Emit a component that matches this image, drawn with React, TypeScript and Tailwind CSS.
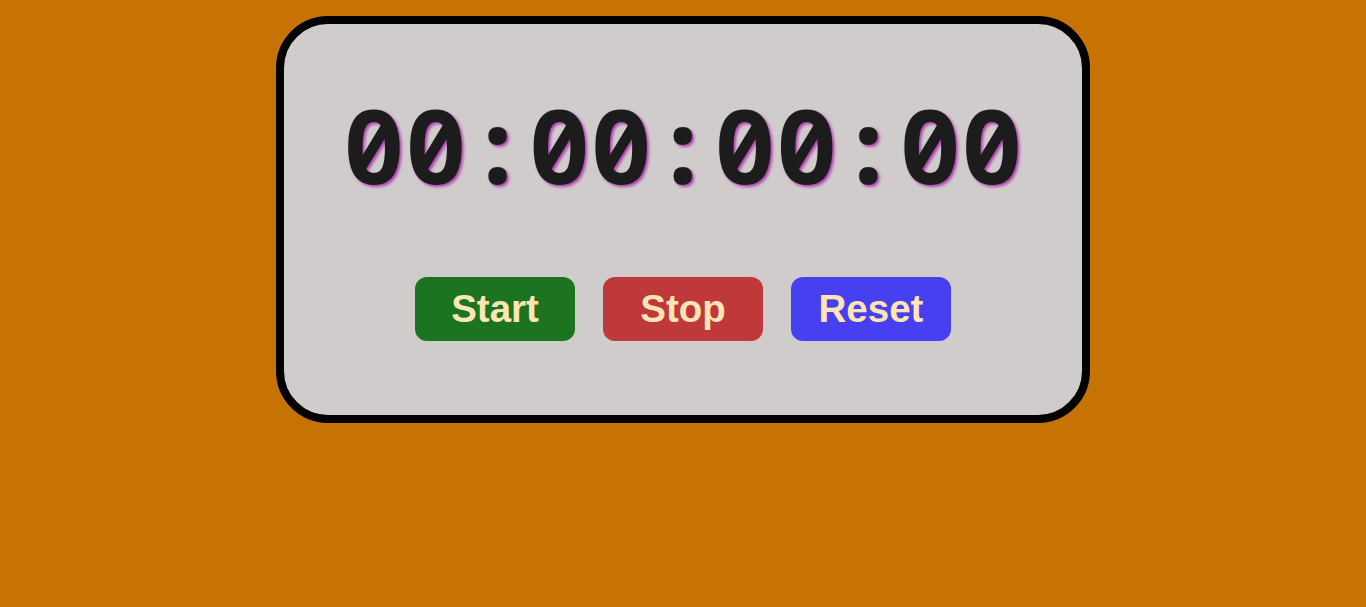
export default function App() {
  const btn =
    "h-[64px] w-[160px] rounded-[12px] text-[38.5px] font-bold leading-none text-[#ffe4b5] [font-family:'Liberation_Sans',Arial,sans-serif]";
  return (
    <div className="min-h-screen w-full bg-[#c77304] pt-4">
      <div className="mx-auto flex h-[407px] w-[814px] flex-col items-center rounded-[52px] border-8 border-black bg-[#d0cccb] pt-[69px]">
        <div
          className="text-[103px] font-bold leading-none text-[#1c1c1c] [text-shadow:2px_2px_3px_#b040b0]"
          style={{ fontFamily: '"Noto Sans Mono", monospace' }}
        >
          00:00:00:00
        </div>
        <div className="mt-[81px] flex gap-[28px]">
          <button className={`${btn} bg-[#1c7320]`}>Start</button>
          <button className={`${btn} bg-[#bf383a]`}>Stop</button>
          <button className={`${btn} bg-[#4640f0]`}>Reset</button>
        </div>
      </div>
    </div>
  );
}
